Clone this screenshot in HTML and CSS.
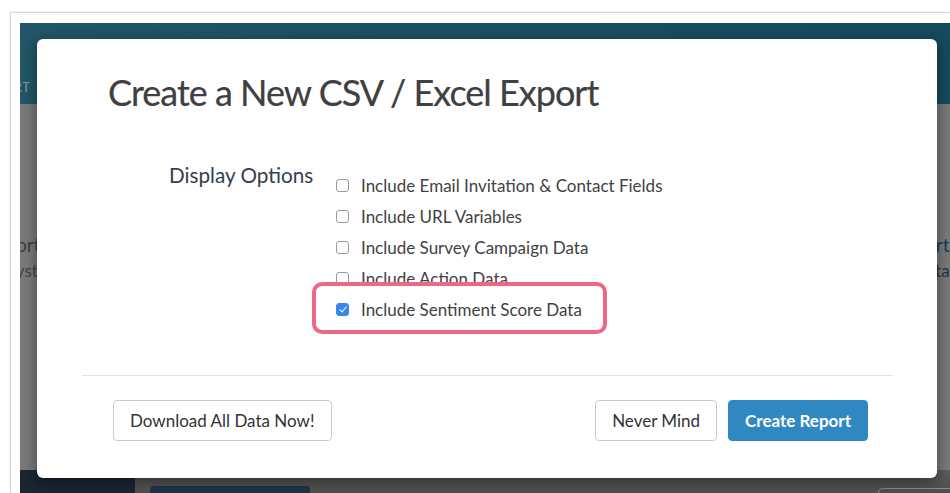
FILE: index.html
```html
<!DOCTYPE html>
<html lang="en">
<head>
<meta charset="utf-8">
<title>Create a New CSV / Excel Export</title>
<link rel="stylesheet" href="styles.css">
</head>
<body>
<div class="frame">
  <div class="app">
    <header class="topbar">
      <span class="topbar-tab">REPORT</span>
    </header>

    <main class="content">
      <div class="tile tile-left">
        <div class="tile-title">Report Builder</div>
        <div class="tile-sub">System reports</div>
      </div>
      <div class="tile tile-right">
        <div class="tile-title">Report</div>
        <div class="tile-sub">Data</div>
      </div>
    </main>

    <div class="bottom">
      <div class="bottom-side"></div>
      <div class="bottom-main">
        <div class="bottom-btn"></div>
        <div class="bottom-pill"></div>
      </div>
    </div>

    <div class="modal" role="dialog" aria-labelledby="export-title">
      <h1 class="modal-title" id="export-title">Create a New CSV / Excel Export</h1>

      <section class="options">
        <div class="options-label">Display Options</div>
        <ul class="options-list">
          <li class="option"><input type="checkbox" class="check"><span>Include Email Invitation &amp; Contact Fields</span></li>
          <li class="option"><input type="checkbox" class="check"><span>Include URL Variables</span></li>
          <li class="option"><input type="checkbox" class="check"><span>Include Survey Campaign Data</span></li>
          <li class="option"><input type="checkbox" class="check"><span>Include Action Data</span></li>
          <li class="option option-highlight"><input type="checkbox" class="check" checked><span>Include Sentiment Score Data</span><i class="highlight-ring"></i></li>
        </ul>
      </section>

      <hr class="modal-rule">

      <footer class="modal-footer">
        <button class="btn">Download All Data Now!</button>
        <button class="btn btn-cancel">Never Mind</button>
        <button class="btn btn-primary">Create Report</button>
      </footer>
    </div>
  </div>
</div>
</body>
</html>
```

FILE: styles.css
```css
html, body {
  margin: 0;
  padding: 0;
  background: #ffffff;
  overflow: hidden;
  height: 493px;
}

body {
  font-family: Lato, "Open Sans", "Liberation Sans", sans-serif;
}

/* outer window edge */
.frame {
  margin: 12px 0 0 10px;
  border-left: 1px solid #d9d9d9;
  border-top: 1px solid #d9d9d9;
  box-shadow: -1px -1px 1px rgba(0, 0, 0, 0.04);
  padding: 10px 0 0 9px;
}

.app {
  position: relative;
  height: 470px;
  overflow: hidden;
  display: flex;
  flex-direction: column;
  background: #797979;
}

/* dimmed page behind the dialog */
.topbar {
  height: 81px;
  flex: none;
  background: linear-gradient(90deg, #215567 0%, #1a4f61 60%, #154a5c 100%);
  padding-top: 53px;
  box-sizing: border-box;
}

.topbar-tab {
  display: inline-block;
  margin-left: -42px;
  font-size: 13px;
  line-height: 14px;
  letter-spacing: 0.5px;
  color: #7f9aa4;
}

.content {
  flex: 1;
  display: flex;
  justify-content: space-between;
  padding-top: 128px;
  background: #797979;
}

.tile-title {
  font-size: 19px;
  line-height: 26px;
}

.tile-sub {
  font-size: 17px;
  line-height: 26px;
}

.tile-left {
  margin-left: -36px;
  color: #3e3e3e;
}

.tile-left .tile-sub {
  margin-left: 23px;
  color: #444;
}

.tile-right {
  margin-right: -40px;
  width: 97px;
}

.tile-right .tile-title {
  color: #1d3b58;
}

.tile-right .tile-sub {
  margin-left: 21px;
  color: #2e2e2e;
}

.bottom {
  height: 23px;
  flex: none;
  display: flex;
}

.bottom-side {
  width: 115px;
  background: #1b2534;
}

.bottom-main {
  flex: 1;
  background: linear-gradient(180deg, #5c5c5c, #4f4f4f);
  display: flex;
  justify-content: space-between;
  padding: 16px 0 0 15px;
}

.bottom-btn {
  width: 160px;
  background: #1e3448;
  border-radius: 4px 4px 0 0;
}

.bottom-pill {
  width: 90px;
  margin-right: -20px;
  margin-top: 2px;
  border: 1px solid #8a8a8a;
  border-bottom: 0;
  border-radius: 6px 6px 0 0;
}

/* dialog */
.modal {
  position: absolute;
  left: 17px;
  top: 16px;
  width: 900px;
  height: 439px;
  box-sizing: border-box;
  background: #ffffff;
  border-radius: 6px;
  box-shadow: 0 4px 14px rgba(0, 0, 0, 0.45);
  padding-top: 31px;
  display: flex;
  flex-direction: column;
}

.modal-title {
  margin: 0 0 0 71px;
  font-size: 36px;
  line-height: 44px;
  font-weight: 400;
  letter-spacing: -1px;
  color: #404040;
  -webkit-text-stroke: 0.2px #404040;
}

.options {
  display: flex;
  margin: 49px 0 0 132px;
}

.options-label {
  width: 167px;
  flex: none;
  font-size: 20.7px;
  line-height: 24px;
  color: #36404c;
}

.options-list {
  list-style: none;
  margin: 0;
  padding: 7px 0 0;
}

.option {
  position: relative;
  display: flex;
  align-items: center;
  height: 31px;
  font-size: 17px;
  line-height: 31px;
  color: #424242;
}

.check {
  appearance: none;
  -webkit-appearance: none;
  position: relative;
  width: 13px;
  height: 13px;
  margin: 0 12px 0 0;
  box-sizing: border-box;
  border: 1px solid #9a9a9a;
  border-radius: 3px;
  background: #ffffff;
  flex: none;
}

.check:checked {
  border-color: #3a86ef;
  background: #3a86ef;
}

.check:checked::after {
  content: "";
  position: absolute;
  left: 3.5px;
  top: 1px;
  width: 3px;
  height: 6px;
  border: solid #ffffff;
  border-width: 0 1.6px 1.6px 0;
  transform: rotate(40deg);
}

/* annotation ring around the sentiment option */
.highlight-ring {
  position: absolute;
  left: -24px;
  top: -12px;
  width: 295px;
  height: 52px;
  box-sizing: border-box;
  border: 4px solid #ee6787;
  border-radius: 10px;
}

.modal-rule {
  margin: 50px 44px 0 45px;
  border: 0;
  border-top: 1px solid #e3e3e3;
  height: 0;
}

.modal-footer {
  display: flex;
  align-items: center;
  gap: 11px;
  margin-top: 24px;
  padding: 0 69px 0 76px;
}

.btn {
  height: 41px;
  padding: 0 16px;
  box-sizing: border-box;
  font-family: Lato, "Open Sans", "Liberation Sans", sans-serif;
  font-size: 17px;
  color: #333;
  background: #ffffff;
  border: 1px solid #cccccc;
  border-radius: 4px;
}

.btn-cancel {
  margin-left: auto;
}

.btn-primary {
  background: #3088c3;
  border-color: #3088c3;
  color: #ffffff;
  font-weight: 700;
}
```
